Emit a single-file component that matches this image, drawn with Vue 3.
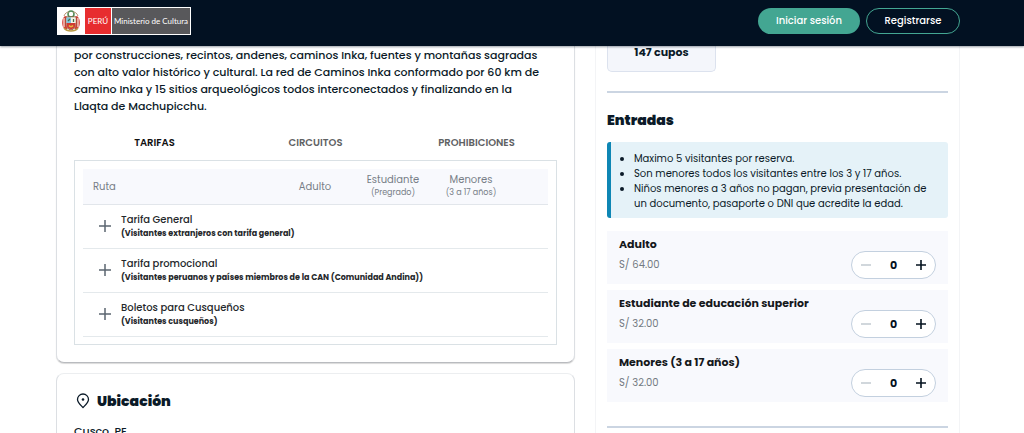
<script setup>
import { ref, reactive } from 'vue'

const tabs = ['TARIFAS', 'CIRCUITOS', 'PROHIBICIONES']
const activeTab = ref('TARIFAS')

const tarifas = [
  { nombre: 'Tarifa General', detalle: '(Visitantes extranjeros con tarifa general)' },
  { nombre: 'Tarifa promocional', detalle: '(Visitantes peruanos y países miembros de la CAN (Comunidad Andina))' },
  { nombre: 'Boletos para Cusqueños', detalle: '(Visitantes cusqueños)' }
]

const entradas = reactive([
  { id: 'adulto', nombre: 'Adulto', precio: 64, cantidad: 0 },
  { id: 'estudiante', nombre: 'Estudiante de educación superior', precio: 32, cantidad: 0 },
  { id: 'menor', nombre: 'Menores (3 a 17 años)', precio: 32, cantidad: 0 }
])

// máximo de visitantes por reserva
const MAX = 5

function sumar(item) {
  const total = entradas.reduce((acc, e) => acc + e.cantidad, 0)
  if (total < MAX) item.cantidad++
}

function restar(item) {
  if (item.cantidad > 0) item.cantidad--
}
</script>

<template>
  <div class="page">
    <header class="topbar">
      <a href="#" class="brand" aria-label="Ministerio de Cultura">
        <span class="brand-shield">
          <svg width="20" height="22" viewBox="0 0 20 22">
            <path d="M4 6C1 8 0.500 13 2 17l3 3 2-2V7z" fill="#d83a33" />
            <path d="M16 6c3 2 3.500 7 2 11l-3 3-2-2V7z" fill="#d83a33" />
            <path d="M3 8v9M17 8v9" stroke="#f3e9df" stroke-width="1.200" />
            <circle cx="10" cy="4" r="3" fill="#fff" stroke="#4f8b55" stroke-width="1.500" />
            <path d="M3 6c1-3 3-4 5-4M17 6c-1-3-3-4-5-4" fill="none" stroke="#b89372" />
            <path d="M5 7h10v8c0 2-2 4-5 5-3-1-5-3-5-5z" fill="#fff" stroke="#8c5a3c" />
            <path d="M5.500 7.500H10V13H5.500z" fill="#7fc4dc" />
            <path d="M10 7.500h4.500V13H10z" fill="#f7f3e6" />
            <path d="M5.500 13h9v2c0 2-2 3.500-4.500 4.500C7.500 18.500 5.500 17 5.500 15z" fill="#cf3a31" />
            <path d="M7 11l2-2M12.500 9v3" stroke="#47724a" stroke-width="1.300" />
            <path d="M8 15.500c1 1.500 3 1.500 4 0" fill="none" stroke="#e6b93f" stroke-width="1.500" />
            <path d="M3 18c3 4 11 4 14 0" fill="none" stroke="#b79a45" stroke-width="1.500" />
          </svg>
        </span>
        <span class="brand-peru">PERÚ</span>
        <span class="brand-name">Ministerio de Cultura</span>
      </a>
      <nav class="topbar-actions">
        <button type="button" class="btn btn-solid">Iniciar sesión</button>
        <button type="button" class="btn btn-outline">Registrarse</button>
      </nav>
    </header>

    <main class="content">
      <div class="col-main">
        <section class="card card-info">
          <p class="description">
            por construcciones, recintos, andenes, caminos Inka, fuentes y montañas sagradas<br />
            con alto valor histórico y cultural. La red de Caminos Inka conformado por 60 km de<br />
            camino Inka y 15 sitios arqueológicos todos interconectados y finalizando en la<br />
            Llaqta de Machupicchu.
          </p>

          <div class="tabs" role="tablist">
            <button
              v-for="tab in tabs"
              :key="tab"
              type="button"
              role="tab"
              class="tab"
              :class="{ active: tab === activeTab }"
              :aria-selected="tab === activeTab"
              @click="activeTab = tab"
            >{{ tab }}</button>
          </div>

          <div class="tab-panel">
            <table class="rates">
              <colgroup>
                <col />
                <col class="col-price" />
                <col class="col-price" />
                <col class="col-price" />
                <col class="col-end" />
              </colgroup>
              <thead>
                <tr>
                  <th class="th-route">Ruta</th>
                  <th>Adulto</th>
                  <th>Estudiante<small>(Pregrado)</small></th>
                  <th>Menores<small>(3 a 17 años)</small></th>
                  <th></th>
                </tr>
              </thead>
              <tbody>
                <tr v-for="t in tarifas" :key="t.nombre">
                  <td colspan="5">
                    <div class="rate">
                      <button type="button" class="expand" :aria-label="'Ver ' + t.nombre">
                        <svg width="14" height="14" viewBox="0 0 14 14" fill="none" stroke="currentColor" stroke-width="1.500">
                          <path d="M7 1v12M1 7h12" />
                        </svg>
                      </button>
                      <div>
                        <div class="rate-name">{{ t.nombre }}</div>
                        <div class="rate-detail">{{ t.detalle }}</div>
                      </div>
                    </div>
                  </td>
                </tr>
              </tbody>
            </table>
          </div>
        </section>

        <section class="card card-location">
          <h2 class="title title-location">
            <svg width="14" height="16" viewBox="0 0 14 16" fill="none" stroke="currentColor" stroke-width="1.300">
              <path d="M7 14.500C4 11.500 1.500 9.500 1.500 6.500a5.500 5.500 0 0 1 11 0c0 3-2.500 5-5.500 8z" stroke-linejoin="round" />
              <circle cx="7" cy="6.500" r="1.300" fill="currentColor" stroke="none" />
            </svg>
            Ubicación
          </h2>
          <p class="place">Cusco, PE</p>
        </section>
      </div>

      <aside class="booking">
        <div class="quota">147 cupos</div>
        <hr class="line" />
        <h2 class="title">Entradas</h2>
        <ul class="notice">
          <li>Maximo 5 visitantes por reserva.</li>
          <li>Son menores todos los visitantes entre los 3 y 17 años.</li>
          <li>Niños menores a 3 años no pagan, previa presentación de<br />un documento, pasaporte o DNI que acredite la edad.</li>
        </ul>

        <div class="tickets">
          <div v-for="e in entradas" :key="e.id" class="ticket">
            <div>
              <label class="ticket-name" :for="e.id">{{ e.nombre }}</label>
              <div class="ticket-price">S/ {{ e.precio.toFixed(2) }}</div>
            </div>
            <div class="stepper">
              <button type="button" aria-label="Restar" :disabled="e.cantidad === 0" @click="restar(e)">
                <svg width="12" height="12" viewBox="0 0 12 12" stroke="currentColor" stroke-width="1.300"><path d="M1 6h10" /></svg>
              </button>
              <input :id="e.id" type="text" :value="e.cantidad" readonly />
              <button type="button" aria-label="Sumar" @click="sumar(e)">
                <svg width="12" height="12" viewBox="0 0 12 12" stroke="currentColor" stroke-width="1.600"><path d="M6 1v10M1 6h10" /></svg>
              </button>
            </div>
          </div>
        </div>
        <hr class="line line-end" />
      </aside>
    </main>
  </div>
</template>

<style>
body {
  margin: 0;
  background: #fff;
}
</style>

<style scoped>
* {
  box-sizing: border-box;
}

.page {
  height: 100vh;
  overflow: hidden;
  font-family: Poppins, Inter, 'Open Sans', sans-serif;
  font-size: 11px;
  color: #0b1a28;
}

button,
input {
  font-family: inherit;
  padding: 0;
  border: 0;
  background: none;
}

button {
  cursor: pointer;
}

svg {
  display: block;
}

/* --- cabecera --- */
.topbar {
  position: relative;
  z-index: 2;
  display: flex;
  justify-content: space-between;
  align-items: flex-start;
  height: 46px;
  padding: 7px 64px 0 57px;
  background: #021122;
  box-shadow: 0 1px 2px rgba(2, 17, 34, 0.4);
}

.brand {
  display: flex;
  gap: 1px;
  width: 134px;
  height: 28px;
  padding: 1px;
  background: #fff;
  font-family: Lato, 'Open Sans', sans-serif;
  font-size: 8px;
  line-height: 26px;
  color: #fff;
  text-align: center;
  text-decoration: none;
  white-space: nowrap;
}

.brand-shield {
  display: flex;
  align-items: center;
  justify-content: center;
  width: 26px;
}

.brand-peru {
  width: 26px;
  background: #e72d2f;
}

.brand-name {
  flex: 1;
  background: #58585b;
}

.topbar-actions {
  display: flex;
  gap: 6px;
  padding-top: 1px;
}

.btn {
  height: 26px;
  border-radius: 13px;
  font-size: 10px;
  font-weight: 500;
  color: #fff;
}

.btn-solid {
  width: 102px;
  background: #43a692;
}

.btn-outline {
  width: 94px;
  border: 1px solid #43a692;
}

/* --- contenido --- */
.content {
  display: grid;
  grid-template-columns: minmax(0, 1fr) 365px;
  gap: 20px;
  padding: 0 64px 0 56px;
}

.card {
  padding: 0 17px;
  border: 1px solid #dcdfe3;
  background: #fff;
}

.card-info {
  padding-top: 1px;
  padding-bottom: 17px;
  border-top: 0;
  border-bottom-color: #b9bbbf;
  border-radius: 0 0 8px 8px;
  box-shadow: 0 1px 1px rgba(0, 0, 0, 0.15);
}

.description {
  margin: 0;
  font-weight: 500;
  line-height: 17px;
  white-space: nowrap;
}

.tabs {
  display: grid;
  grid-template-columns: repeat(3, 1fr);
  height: 45px;
}

.tab {
  padding-top: 11px;
  font-size: 10px;
  font-weight: 600;
  color: #5f6264;
}

.tab.active {
  color: #111;
}

.tab-panel {
  padding: 8px 8px 7px;
  border: 1px solid #dae1e5;
}

.rates {
  width: 100%;
  table-layout: fixed;
  border-collapse: collapse;
}

.col-price {
  width: 78px;
}

.col-end {
  width: 38px;
}

.rates th {
  height: 35px;
  padding: 0;
  background: #f8f9fd;
  border-bottom: 1px solid #e2e6eb;
  font-size: 10px;
  font-weight: 400;
  line-height: 13px;
  color: #777e87;
}

.rates th small {
  display: block;
  font-size: 8px;
}

.rates .th-route {
  padding-left: 10px;
  text-align: left;
}

.rates td {
  height: 44px;
  padding: 0;
  border-bottom: 1px solid #e4e9ec;
}

.rate {
  display: flex;
  align-items: center;
  gap: 9px;
  padding-left: 15px;
}

.expand {
  color: #5b6570;
}

.rate-name {
  font-size: 10px;
  font-weight: 500;
  line-height: 14px;
  color: #25282b;
}

.rate-detail {
  font-size: 8px;
  font-weight: 700;
  line-height: 13px;
  color: #25282b;
}

.card-location {
  margin-top: 10px;
  padding-top: 17px;
  border-top-color: #eceef0;
  border-radius: 8px;
}

.title {
  margin: 0;
  font-size: 14px;
  font-weight: 900;
  line-height: 20px;
}

.title-location {
  display: flex;
  align-items: center;
  gap: 7px;
  padding-left: 2px;
}

.place {
  margin: 12px 0 16px;
  font-weight: 500;
  line-height: 17px;
}

/* --- reserva --- */
.booking {
  padding: 0 11px 20px;
  border: 1px solid #f3f4f6;
  border-top: 0;
}

.quota {
  width: 109px;
  height: 26px;
  border: 1px solid #dce2ee;
  border-top: 0;
  border-radius: 0 0 5px 5px;
  background: #f4f6fb;
  font-size: 11px;
  font-weight: 700;
  line-height: 12px;
  text-align: center;
}

.line {
  height: 2px;
  margin: 19px 0 17px;
  border: 0;
  background: #cbd5e2;
}

.line-end {
  margin-top: 24px;
}

.notice {
  margin: 12px 0 13px;
  padding: 9px 8px 7px 23px;
  border-left: 4px solid #0e86b4;
  border-radius: 3px;
  background: #e5f2f8;
  font-size: 10px;
  line-height: 15px;
  white-space: nowrap;
}

.tickets {
  display: grid;
  gap: 6px;
}

.ticket {
  display: flex;
  justify-content: space-between;
  align-items: flex-end;
  height: 53px;
  padding: 5px 12px;
  background: #f8f9fd;
}

.ticket > div:first-child {
  align-self: flex-start;
}

.ticket-name {
  display: block;
  font-size: 11px;
  font-weight: 700;
  line-height: 16px;
  color: #15181b;
}

.ticket-price {
  margin-top: 5px;
  font-size: 10px;
  line-height: 16px;
  color: #737a82;
}

.stepper {
  display: flex;
  align-items: center;
  justify-content: space-between;
  width: 85px;
  height: 28px;
  padding: 0 8px;
  border: 1px solid #c3d0df;
  border-radius: 14px;
  background: #fff;
}

.stepper button {
  color: #04121f;
}

.stepper button:disabled {
  color: #b9c1ca;
  cursor: default;
}

.stepper input {
  width: 24px;
  font-size: 11px;
  font-weight: 700;
  text-align: center;
  color: #04121f;
}
</style>
